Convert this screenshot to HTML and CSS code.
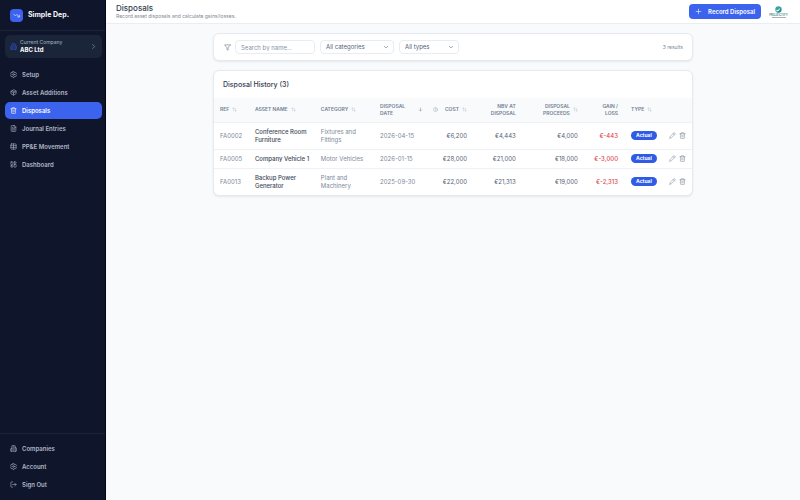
FILE: index.html
```html
<!DOCTYPE html>
<html lang="en">
<head>
<meta charset="utf-8">
<meta name="viewport" content="width=device-width,initial-scale=1">
<title>Disposals - Simple Dep.</title>
<link rel="stylesheet" href="styles.css">
</head>
<body>

<!-- shared icons -->
<svg class="sprite" aria-hidden="true">
  <symbol id="i-trend" viewBox="0 0 24 24"><path d="M22 17l-8.500-8.500-5 5L2 7"/><path d="M16 17h6v-6"/></symbol>
  <symbol id="i-building" viewBox="0 0 24 24"><path d="M6 22V4a2 2 0 0 1 2-2h8a2 2 0 0 1 2 2v18z"/><path d="M6 12H4a2 2 0 0 0-2 2v6a2 2 0 0 0 2 2h2M18 9h2a2 2 0 0 1 2 2v9a2 2 0 0 1-2 2h-2M10 6h4M10 10h4M10 14h4M10 18h4"/></symbol>
  <symbol id="i-gear" viewBox="0 0 24 24"><path d="M10 2h4l1 3 2 1 3-1 2 4-2 2v2l2 2-2 4-3-1-2 1-1 3h-4l-1-3-2-1-3 1-2-4 2-2v-2L2 9l2-4 3 1 2-1z"/><circle cx="12" cy="12" r="3"/></symbol>
  <symbol id="i-box" viewBox="0 0 24 24"><path d="M21 8v8l-9 5-9-5V8l9-5zM3 8l9 5 9-5M12 13v8M7.500 5.500l9 5"/></symbol>
  <symbol id="i-trash" viewBox="0 0 24 24"><path d="M3 6h18M19 6v14a2 2 0 0 1-2 2H7a2 2 0 0 1-2-2V6M8 6V4a2 2 0 0 1 2-2h4a2 2 0 0 1 2 2v2M10 11v6M14 11v6"/></symbol>
  <symbol id="i-file" viewBox="0 0 24 24"><path d="M15 2H6a2 2 0 0 0-2 2v16a2 2 0 0 0 2 2h12a2 2 0 0 0 2-2V7zM14 2v6h6M8 9h2M8 13h8M8 17h8"/></symbol>
  <symbol id="i-table" viewBox="0 0 24 24"><rect x="3" y="3" width="18" height="18" rx="2"/><path d="M12 3v18M3 9h18M3 15h18"/></symbol>
  <symbol id="i-dash" viewBox="0 0 24 24"><rect x="3" y="3" width="7" height="9" rx="1"/><rect x="14" y="3" width="7" height="5" rx="1"/><rect x="14" y="12" width="7" height="9" rx="1"/><rect x="3" y="16" width="7" height="5" rx="1"/></symbol>
  <symbol id="i-out" viewBox="0 0 24 24"><path d="M9 21H5a2 2 0 0 1-2-2V5a2 2 0 0 1 2-2h4M16 17l5-5-5-5M21 12H9"/></symbol>
  <symbol id="i-right" viewBox="0 0 24 24"><path d="M9 19l7-7-7-7"/></symbol>
  <symbol id="i-down" viewBox="0 0 24 24"><path d="M5 9l7 7 7-7"/></symbol>
  <symbol id="i-plus" viewBox="0 0 24 24"><path d="M4 12h16M12 4v16"/></symbol>
  <symbol id="i-filter" viewBox="0 0 24 24"><path d="M22 3H2l8 9.500V19l4 2v-8.500z"/></symbol>
  <symbol id="i-sort" viewBox="0 0 24 24"><path d="M3 8l4-4 4 4M7 4v14M21 16l-4 4-4-4M17 20V6"/></symbol>
  <symbol id="i-desc" viewBox="0 0 24 24"><path d="M12 5v14M17 14l-5 5-5-5"/></symbol>
  <symbol id="i-help" viewBox="0 0 24 24"><circle cx="12" cy="12" r="10"/><path d="M9 9a3 3 0 0 1 6 1c0 2-3 2-3 4M12 17v1"/></symbol>
  <symbol id="i-pencil" viewBox="0 0 24 24"><path d="M17 3a3 3 0 0 1 4 4L8 20l-6 2 2-6zM14 6l4 4"/></symbol>
</svg>

<div class="app">
  <aside class="sidebar">
    <div class="brand">
      <span class="brand-mark"><svg class="icon"><use href="#i-trend"/></svg></span>
      Simple Dep.
    </div>

    <button class="company" type="button">
      <svg class="icon company-icon"><use href="#i-building"/></svg>
      <span class="company-text"><small>Current Company</small><strong>ABC Ltd</strong></span>
      <svg class="icon"><use href="#i-right"/></svg>
    </button>

    <nav class="nav">
      <a href="#setup"><svg class="icon"><use href="#i-gear"/></svg>Setup</a>
      <a href="#additions"><svg class="icon"><use href="#i-box"/></svg>Asset Additions</a>
      <a class="active" href="#disposals"><svg class="icon"><use href="#i-trash"/></svg>Disposals</a>
      <a href="#journal"><svg class="icon"><use href="#i-file"/></svg>Journal Entries</a>
      <a href="#movement"><svg class="icon"><use href="#i-table"/></svg>PP&amp;E Movement</a>
      <a href="#dashboard"><svg class="icon"><use href="#i-dash"/></svg>Dashboard</a>
    </nav>

    <nav class="nav nav-bottom">
      <a href="#companies"><svg class="icon"><use href="#i-building"/></svg>Companies</a>
      <a href="#account"><svg class="icon"><use href="#i-gear"/></svg>Account</a>
      <a href="#signout"><svg class="icon"><use href="#i-out"/></svg>Sign Out</a>
    </nav>
  </aside>

  <div class="page">
    <header class="topbar">
      <div class="heading">
        <h1>Disposals</h1>
        <p>Record asset disposals and calculate gains/losses.</p>
      </div>
      <button class="primary" type="button"><svg class="icon"><use href="#i-plus"/></svg>Record Disposal</button>
      <div class="client">
        <svg class="client-mark" viewBox="0 0 24 24" aria-hidden="true">
          <circle cx="12" cy="12" r="11" fill="#3aa5a0"/>
          <path d="M3 14c7 1 11-3 14-8 0 8-4 13-11 13z" fill="#e9f7f5"/>
          <path d="M7 20c7 0 11-5 12-12 4 7-2 15-9 15z" fill="#1f7f86"/>
        </svg>
        <span class="client-name">PROJECTIFY</span>
        <span class="client-line"></span>
      </div>
    </header>

    <main class="content">
      <form class="card filters">
        <svg class="icon filter-icon"><use href="#i-filter"/></svg>
        <input class="field search" type="text" placeholder="Search by name..." aria-label="Search by name">
        <div class="select">
          <select class="field categories" aria-label="Category"><option>All categories</option></select>
          <svg class="icon icon-sm"><use href="#i-down"/></svg>
        </div>
        <div class="select">
          <select class="field types" aria-label="Type"><option>All types</option></select>
          <svg class="icon icon-sm"><use href="#i-down"/></svg>
        </div>
        <span class="results">3 results</span>
      </form>

      <section class="card">
        <h2>Disposal History (3)</h2>
        <table>
          <colgroup>
            <col class="c-ref"><col class="c-name"><col class="c-cat"><col class="c-date"><col class="c-cost">
            <col class="c-nbv"><col class="c-proceeds"><col class="c-gain"><col class="c-type"><col>
          </colgroup>
          <thead>
            <tr>
              <th><div class="th">Ref <svg class="icon"><use href="#i-sort"/></svg></div></th>
              <th><div class="th">Asset name <svg class="icon"><use href="#i-sort"/></svg></div></th>
              <th><div class="th">Category <svg class="icon"><use href="#i-sort"/></svg></div></th>
              <th class="date"><div class="th th-spread"><span>Disposal<br>date</span> <svg class="icon sorted"><use href="#i-desc"/></svg></div></th>
              <th><div class="th th-end"><svg class="icon help"><use href="#i-help"/></svg> Cost <svg class="icon"><use href="#i-sort"/></svg></div></th>
              <th class="num">NBV at<br>disposal</th>
              <th class="num"><div class="th th-end"><span>Disposal<br>proceeds</span> <svg class="icon"><use href="#i-sort"/></svg></div></th>
              <th class="num">Gain /<br>loss</th>
              <th><div class="th">Type <svg class="icon"><use href="#i-sort"/></svg></div></th>
              <th></th>
            </tr>
          </thead>
          <tbody>
            <tr>
              <td>FA0002</td><td class="name">Conference Room Furniture</td><td>Fixtures and Fittings</td><td>2026-04-15</td>
              <td class="num">€6,200</td><td class="num">€4,443</td><td class="num">€4,000</td><td class="num loss">€-443</td>
              <td><span class="badge">Actual</span></td>
              <td><div class="actions">
                <button type="button" aria-label="Edit FA0002"><svg class="icon"><use href="#i-pencil"/></svg></button>
                <button type="button" aria-label="Delete FA0002"><svg class="icon"><use href="#i-trash"/></svg></button>
              </div></td>
            </tr>
            <tr>
              <td>FA0005</td><td class="name">Company Vehicle 1</td><td>Motor Vehicles</td><td>2026-01-15</td>
              <td class="num">€28,000</td><td class="num">€21,000</td><td class="num">€18,000</td><td class="num loss">€-3,000</td>
              <td><span class="badge">Actual</span></td>
              <td><div class="actions">
                <button type="button" aria-label="Edit FA0005"><svg class="icon"><use href="#i-pencil"/></svg></button>
                <button type="button" aria-label="Delete FA0005"><svg class="icon"><use href="#i-trash"/></svg></button>
              </div></td>
            </tr>
            <tr>
              <td>FA0013</td><td class="name">Backup Power Generator</td><td>Plant and Machinery</td><td>2025-09-30</td>
              <td class="num">€22,000</td><td class="num">€21,313</td><td class="num">€19,000</td><td class="num loss">€-2,313</td>
              <td><span class="badge">Actual</span></td>
              <td><div class="actions">
                <button type="button" aria-label="Edit FA0013"><svg class="icon"><use href="#i-pencil"/></svg></button>
                <button type="button" aria-label="Delete FA0013"><svg class="icon"><use href="#i-trash"/></svg></button>
              </div></td>
            </tr>
          </tbody>
        </table>
      </section>
    </main>
  </div>
</div>

</body>
</html>
```
FILE: styles.css
```css
*{box-sizing:border-box}
body{margin:0;font-family:Inter,"Liberation Sans",sans-serif;font-size:6px;line-height:8px;
     color:#566275;background:#f8fafc}
h1,h2,p{margin:0}
button,input,select{font:inherit;color:inherit}
button{border:0;padding:0;background:none;cursor:pointer}
a{color:inherit;text-decoration:none}

.sprite{display:none}
.icon{width:7px;height:7px;flex:none;display:block;fill:none;stroke:currentColor;
      stroke-width:2;stroke-linecap:round;stroke-linejoin:round}
.icon-sm{width:6px;height:6px}

.app{display:flex;min-height:100vh}

/* ── sidebar ── */
.sidebar{flex:0 0 106px;display:flex;flex-direction:column;
         background:#0f152b;border-right:1px solid #020617;color:#b0b7c6}
.brand{display:flex;align-items:center;gap:5px;height:31px;padding:0 10px;
       border-bottom:1px solid #1a2338;font-size:7px;font-weight:700;color:#f8fafc}
.brand-mark{display:grid;place-items:center;width:13px;height:13px;border-radius:4px;
            background:#3d63ee;color:#fff}
.company{display:flex;align-items:center;gap:3px;margin:4px 3px 7px 5px;padding:4px 5px;
         border-radius:5px;background:#1b2539;text-align:left;color:#94a3b8}
.company-icon{color:#3156cc}
.company-text{flex:1;display:flex;flex-direction:column}
.company small{font-size:5px;line-height:7px;font-weight:500}
.company strong{font-size:6px;line-height:8px;font-weight:700;color:#fff}
.nav{display:flex;flex-direction:column;gap:1px;padding:1px 3px 0 5px}
.nav a{display:flex;align-items:center;gap:5px;height:17px;padding:0 5px;
       border-radius:5px;font-weight:600}
.nav .active{background:#3b63ee;color:#fff}
.nav-bottom{margin-top:auto;padding-top:6px;padding-bottom:7px;border-top:1px solid #1a2338}

/* ── top bar ── */
.page{flex:1;min-width:0}
.topbar{display:flex;align-items:center;gap:7px;height:24px;padding:0 11px 0 10px;
        background:#fff;border-bottom:1px solid #e9eef4}
.heading{flex:1}
.heading h1{font-size:8px;line-height:9px;font-weight:500;color:#323d4e}
.heading p{font-size:5px;line-height:7px;color:#7c8797}
.primary{display:flex;align-items:center;gap:6px;height:15px;padding:0 6px;
         border-radius:4px;background:#3b63ee;color:#fff;font-weight:600}
.client{display:flex;flex-direction:column;align-items:center;width:21px}
.client-mark{width:7px;height:7px}
.client-name{font-size:3px;line-height:4px;font-weight:600;color:#3f7f86}
.client-line{width:14px;height:1px;background:#a3b4b8}

/* ── content ── */
.content{max-width:480px;margin:9px auto;display:flex;flex-direction:column;gap:9px}
.card{overflow:hidden;background:#fff;border:1px solid #e5eaf1;border-radius:6px;
      box-shadow:0 1px 2px rgba(15,23,42,.08)}
.filters{display:flex;align-items:center;gap:5px;height:28px;padding:0 9px 0 10px}
.filter-icon{color:#64748b;margin-right:-1px}
.field{height:14px;padding:0 5px;border:1px solid #e8edf3;border-radius:4px;
       background:#fff;outline:0}
.field::placeholder{color:#8793a3;opacity:1}
.search{width:80px}
.select{display:grid;align-items:center}
.select>*{grid-area:1/1}
.select select{appearance:none}
.select .icon{justify-self:end;margin-right:5px;pointer-events:none}
.categories{width:74px}
.types{width:60px}
.results{margin-left:auto;font-size:5px;color:#7c8797}

h2{padding:10px 9px 9px;font-size:7px;line-height:8px;font-weight:500;color:#323d4e}
table{width:100%;table-layout:fixed;border-collapse:collapse}
.c-ref{width:7.3%}
.c-name{width:13.8%}
.c-cat{width:12.400%}
.c-date{width:10.900%}
.c-cost{width:10%}
.c-nbv{width:10.200%}
.c-proceeds{width:13%}
.c-gain{width:8.400%}
.c-type{width:8%}
th{height:24px;padding:0 7px 0 6px;background:#f8fafc;text-align:left;
   font-size:5px;line-height:7px;font-weight:600;color:#728095;text-transform:uppercase}
.th{display:flex;align-items:center;gap:3px}
.th .icon{width:5px;height:5px;color:#b4bfcc}
.th-end{justify-content:flex-end}
.th-spread{justify-content:space-between}
.th .sorted{color:#64748b}
.th .help{margin-right:4px;color:#94a3b8}
td{padding:5px 7px 5px 6px;border-top:1px solid #eef2f6;color:#7d899a}
th:nth-child(9),td:nth-child(9){padding-right:0}
th:last-child,td:last-child{padding:0 6px 0 0}
th.date{padding-right:3px}
td.name{padding-right:4px;font-weight:500;color:#3b4657}
.num{text-align:right}
td.num{color:#566275}
td.loss{color:#dc4a50;font-weight:500}
.badge{display:block;width:max-content;padding:0 5px;border-radius:5px;background:#2f5be7;
       color:#fff;font-size:5px;line-height:9px;font-weight:700;margin:-1px 0}
.actions{display:flex;justify-content:flex-end;gap:3px;color:#64748b}
.actions .icon{stroke-width:1.5}
```
